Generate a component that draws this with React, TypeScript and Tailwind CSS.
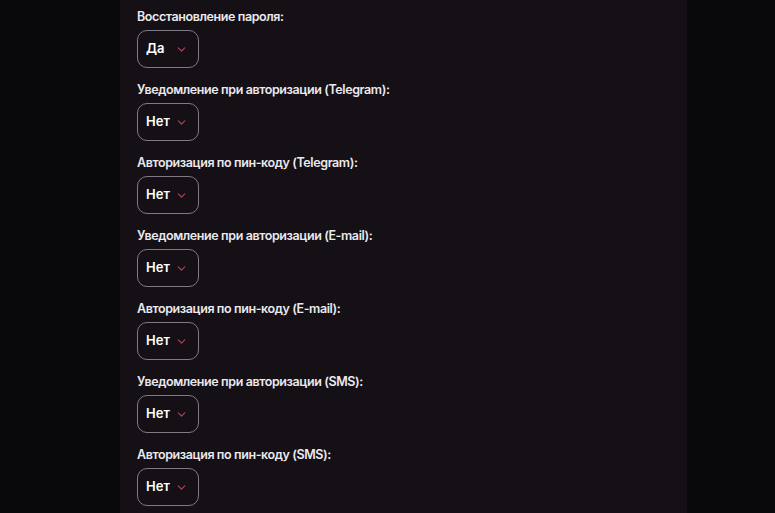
import { ChevronDown } from 'lucide-react';

const settings = [
  { label: 'Восстановление пароля:', value: 'Да' },
  { label: 'Уведомление при авторизации (Telegram):', value: 'Нет' },
  { label: 'Авторизация по пин-коду (Telegram):', value: 'Нет' },
  { label: 'Уведомление при авторизации (E-mail):', value: 'Нет' },
  { label: 'Авторизация по пин-коду (E-mail):', value: 'Нет' },
  { label: 'Уведомление при авторизации (SMS):', value: 'Нет' },
  { label: 'Авторизация по пин-коду (SMS):', value: 'Нет' },
];

export default function App() {
  return (
    <div className="h-[513px] w-full overflow-hidden bg-[#09080a] font-['Inter',sans-serif]">
      <div className="ml-[120px] h-full w-[567px] bg-[#141016] pl-[17px] pt-[8px]">
        <div className="flex flex-col gap-[13px]">
          {settings.map((item, index) => (
            <div key={index} className="flex flex-col gap-[4px]">
              <div className="h-[18px] text-[12.5px] font-semibold leading-[18px] tracking-[-0.4px] text-[#ebe9ee]">
                {item.label}
              </div>
              <button className="flex h-[38px] w-[62px] items-center rounded-[10px] border border-[#7f7a85] pl-[8px] text-[13px] font-semibold text-white">
                <span className="w-[29px] text-left">{item.value}</span>
                <ChevronDown className="h-[13px] w-[13px] text-[#b0415d]" strokeWidth={2.2} />
              </button>
            </div>
          ))}
        </div>
      </div>
    </div>
  );
}
